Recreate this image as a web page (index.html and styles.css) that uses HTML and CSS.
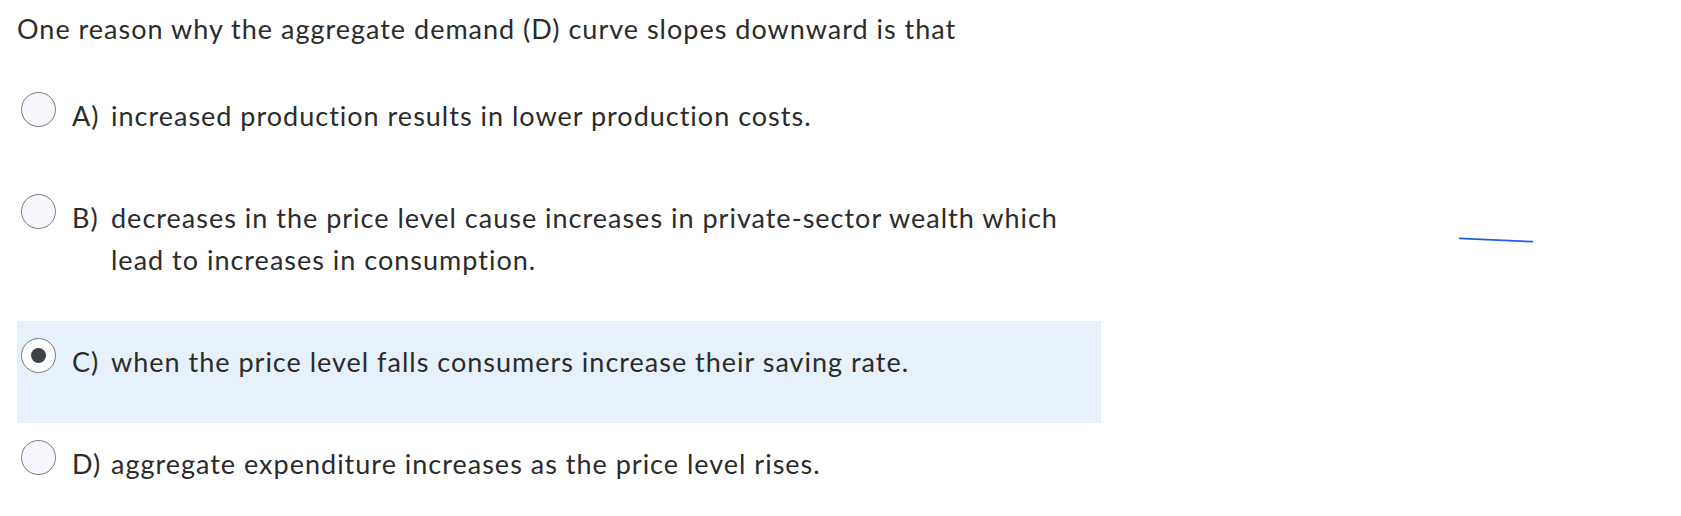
FILE: index.html
```html
<!DOCTYPE html>
<html lang="en">
<head>
<meta charset="utf-8">
<title>Quiz question</title>
<link rel="stylesheet" href="styles.css">
</head>
<body>
<div class="page">
  <p class="prompt">One reason why the aggregate demand (D) curve slopes downward is that</p>
  <div class="answers">
    <div class="answer">
      <span class="radio"></span>
      <span class="label">A)</span>
      <span class="text">increased production results in lower production costs.</span>
    </div>
    <div class="answer">
      <span class="radio"></span>
      <span class="label">B)</span>
      <span class="text">decreases in the price level cause increases in private-sector wealth which lead to increases in consumption.</span>
    </div>
    <div class="answer selected">
      <span class="radio checked"></span>
      <span class="label">C)</span>
      <span class="text">when the price level falls consumers increase their saving rate.</span>
    </div>
    <div class="answer">
      <span class="radio"></span>
      <span class="label">D)</span>
      <span class="text">aggregate expenditure increases as the price level rises.</span>
    </div>
  </div>
</div>
<svg class="stray-line" width="80" height="8" viewBox="0 0 80 8" aria-hidden="true">
  <line x1="2" y1="2.3" x2="76" y2="5.7" stroke="#1f5fe0" stroke-width="1.8"/>
</svg>
</body>
</html>
```
FILE: styles.css
```css
html, body {
  margin: 0;
  padding: 0;
  background: #ffffff;
}

body {
  font-family: Lato, "Open Sans", sans-serif;
  font-size: 27px;
  line-height: 42px;
  letter-spacing: 1px;
  color: #2b2b2b;
}

.page {
  padding: 8px 0 0 17px;
}

.prompt {
  margin: 0 0 25px 0;
}

.answers {
  width: 1084px;
}

.answer {
  display: grid;
  grid-template-columns: 51px 39px 1fr;
  align-items: start;
  padding: 17px 4px 40px 4px;
}

.answer.selected {
  background: #e7f1fb;
}

.radio {
  width: 35px;
  height: 35px;
  box-sizing: border-box;
  border: 1.3px solid #7a7a7a;
  border-radius: 50%;
  background: #f7f8fd;
  display: flex;
  align-items: center;
  justify-content: center;
}

.radio.checked {
  background: #ffffff;
}

.radio.checked::after {
  content: "";
  width: 15px;
  height: 15px;
  border-radius: 50%;
  background: #3f4245;
}

.label,
.text {
  padding-top: 3px;
}

.label {
  white-space: nowrap;
}

.stray-line {
  position: absolute;
  left: 1457px;
  top: 236px;
}
```
